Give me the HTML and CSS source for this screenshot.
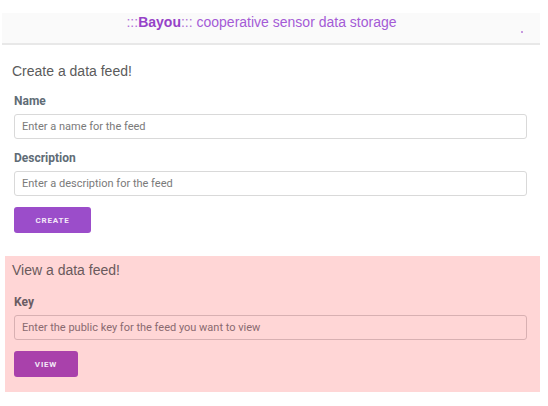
FILE: index.html
```html
<!DOCTYPE html>
<html>
<head>
<meta charset="utf-8">
<link rel="stylesheet" href="styles.css">
</head>
<body>
<header class="topbar">
  <div class="title"><span class="colons">:::</span><b>Bayou</b><span class="colons">:::</span> cooperative sensor data storage</div>
  <div class="dot-row"><span class="dot"></span></div>
</header>
<main class="page">
  <section class="panel create">
    <h2 class="panel-title">Create a data feed!</h2>
    <label class="field-label" for="name">Name</label>
    <input class="field" id="name" type="text" placeholder="Enter a name for the feed">
    <label class="field-label" for="desc">Description</label>
    <input class="field" id="desc" type="text" placeholder="Enter a description for the feed">
    <button class="btn btn-create">CREATE</button>
  </section>
  <section class="panel view">
    <h2 class="panel-title">View a data feed!</h2>
    <label class="field-label" for="key">Key</label>
    <input class="field" id="key" type="text" placeholder="Enter the public key for the feed you want to view">
    <button class="btn btn-view">VIEW</button>
  </section>
</main>
</body>
</html>
```
FILE: styles.css
```css
* { box-sizing: border-box; }
html, body { margin: 0; padding: 0; background: #fff; }
body { font-family: "Liberation Sans", Arial, sans-serif; }

.topbar {
  margin: 13px 8px 0 2px;
  height: 32px;
  background: #fafafa;
  border-bottom: 2px solid #e8e8e8;
}
.title {
  text-align: center;
  font-size: 14px;
  line-height: 17px;
  padding: 1px 19px 0 0;
  color: #a45ad6;
}
.title b { color: #9642c8; font-weight: bold; }
.title .colons { color: #b070d8; }
.dot-row { display: flex; justify-content: flex-end; padding-right: 17px; }
.dot { display: block; width: 2px; height: 2px; margin-top: 0; background: #c79ae0; }

.page { margin: 0 8px 0 5px; }

.panel { display: flex; flex-direction: column; align-items: flex-start; padding: 0 13px 0 9px; }
.create { padding-top: 16px; padding-bottom: 23px; }
.view { background: #ffd6d6; padding-top: 4px; padding-bottom: 15px; }

.panel-title {
  margin: 0 0 12px -2px;
  font-family: "Liberation Sans", Arial, sans-serif;
  font-weight: normal;
  font-size: 14px;
  line-height: 20px;
  color: #5b5b5b;
}
.view .panel-title { margin-bottom: 14px; color: #6a5a5c; }

.field-label {
  font-family: Roboto, "Noto Sans", sans-serif;
  font-weight: bold;
  font-size: 12px;
  line-height: 16px;
  color: #606c76;
  margin-bottom: 5px;
}
.view .field-label { color: #6a5c63; }

.field {
  width: 100%;
  height: 25px;
  margin: 0 0 11px 0;
  padding: 0 7px;
  border: 1px solid #d9d9d9;
  border-radius: 3px;
  background: #fff;
  font-family: Roboto, "Noto Sans", sans-serif;
  font-size: 11px;
  color: #333;
  outline: none;
}
.field::placeholder { color: #7a7a7a; }
.view .field { background: #ffd6d6; border-color: #d8b0b2; }
.view .field::placeholder { color: #8a6a70; }

.btn {
  border: 0;
  border-radius: 3px;
  height: 26px;
  padding: 0;
  color: #f3e8f8;
  font-family: Roboto, "Noto Sans", sans-serif;
  font-weight: bold;
  font-size: 8px;
  letter-spacing: 0.8px;
}
.btn-create { width: 77px; background: #9b4dca; }
.btn-view { width: 64px; background: #a941ab; }
```
